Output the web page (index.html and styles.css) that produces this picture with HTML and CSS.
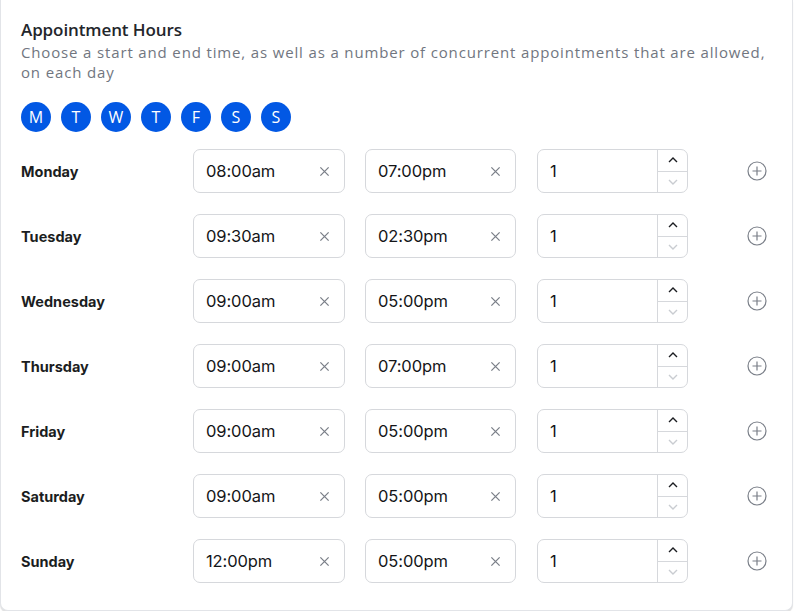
FILE: index.html
```html
<!DOCTYPE html>
<html>
<head>
<meta charset="utf-8">
<link rel="stylesheet" href="styles.css">
</head>
<body>
<div class="card">
  <h2 class="title">Appointment Hours</h2>
  <p class="subtitle">Choose a start and end time, as well as a number of concurrent appointments that are allowed, on each day</p>
  <div class="days">
    <span class="day">M</span><span class="day">T</span><span class="day">W</span><span class="day">T</span><span class="day">F</span><span class="day">S</span><span class="day">S</span>
  </div>
  <div class="rows">
    <div class="row">
      <div class="label">Monday</div>
      <div class="field"><span class="val">08:00am</span><svg class="x" viewBox="0 0 12 12"><path d="M1.5 1.5l9 9M10.5 1.5l-9 9"/></svg></div>
      <div class="field"><span class="val">07:00pm</span><svg class="x" viewBox="0 0 12 12"><path d="M1.5 1.5l9 9M10.5 1.5l-9 9"/></svg></div>
      <div class="num"><span class="val">1</span><div class="step"><div class="up"><svg viewBox="0 0 12 8"><path d="M2 6l4-4 4 4"/></svg></div><div class="down"><svg viewBox="0 0 12 8"><path d="M2 2l4 4 4-4"/></svg></div></div></div>
      <svg class="plus" viewBox="0 0 20 20"><circle cx="10" cy="10" r="9"/><path d="M10 5.5v9M5.5 10h9"/></svg>
    </div>
    <div class="row">
      <div class="label">Tuesday</div>
      <div class="field"><span class="val">09:30am</span><svg class="x" viewBox="0 0 12 12"><path d="M1.5 1.5l9 9M10.5 1.5l-9 9"/></svg></div>
      <div class="field"><span class="val">02:30pm</span><svg class="x" viewBox="0 0 12 12"><path d="M1.5 1.5l9 9M10.5 1.5l-9 9"/></svg></div>
      <div class="num"><span class="val">1</span><div class="step"><div class="up"><svg viewBox="0 0 12 8"><path d="M2 6l4-4 4 4"/></svg></div><div class="down"><svg viewBox="0 0 12 8"><path d="M2 2l4 4 4-4"/></svg></div></div></div>
      <svg class="plus" viewBox="0 0 20 20"><circle cx="10" cy="10" r="9"/><path d="M10 5.5v9M5.5 10h9"/></svg>
    </div>
    <div class="row">
      <div class="label">Wednesday</div>
      <div class="field"><span class="val">09:00am</span><svg class="x" viewBox="0 0 12 12"><path d="M1.5 1.5l9 9M10.5 1.5l-9 9"/></svg></div>
      <div class="field"><span class="val">05:00pm</span><svg class="x" viewBox="0 0 12 12"><path d="M1.5 1.5l9 9M10.5 1.5l-9 9"/></svg></div>
      <div class="num"><span class="val">1</span><div class="step"><div class="up"><svg viewBox="0 0 12 8"><path d="M2 6l4-4 4 4"/></svg></div><div class="down"><svg viewBox="0 0 12 8"><path d="M2 2l4 4 4-4"/></svg></div></div></div>
      <svg class="plus" viewBox="0 0 20 20"><circle cx="10" cy="10" r="9"/><path d="M10 5.5v9M5.5 10h9"/></svg>
    </div>
    <div class="row">
      <div class="label">Thursday</div>
      <div class="field"><span class="val">09:00am</span><svg class="x" viewBox="0 0 12 12"><path d="M1.5 1.5l9 9M10.5 1.5l-9 9"/></svg></div>
      <div class="field"><span class="val">07:00pm</span><svg class="x" viewBox="0 0 12 12"><path d="M1.5 1.5l9 9M10.5 1.5l-9 9"/></svg></div>
      <div class="num"><span class="val">1</span><div class="step"><div class="up"><svg viewBox="0 0 12 8"><path d="M2 6l4-4 4 4"/></svg></div><div class="down"><svg viewBox="0 0 12 8"><path d="M2 2l4 4 4-4"/></svg></div></div></div>
      <svg class="plus" viewBox="0 0 20 20"><circle cx="10" cy="10" r="9"/><path d="M10 5.5v9M5.5 10h9"/></svg>
    </div>
    <div class="row">
      <div class="label">Friday</div>
      <div class="field"><span class="val">09:00am</span><svg class="x" viewBox="0 0 12 12"><path d="M1.5 1.5l9 9M10.5 1.5l-9 9"/></svg></div>
      <div class="field"><span class="val">05:00pm</span><svg class="x" viewBox="0 0 12 12"><path d="M1.5 1.5l9 9M10.5 1.5l-9 9"/></svg></div>
      <div class="num"><span class="val">1</span><div class="step"><div class="up"><svg viewBox="0 0 12 8"><path d="M2 6l4-4 4 4"/></svg></div><div class="down"><svg viewBox="0 0 12 8"><path d="M2 2l4 4 4-4"/></svg></div></div></div>
      <svg class="plus" viewBox="0 0 20 20"><circle cx="10" cy="10" r="9"/><path d="M10 5.5v9M5.5 10h9"/></svg>
    </div>
    <div class="row">
      <div class="label">Saturday</div>
      <div class="field"><span class="val">09:00am</span><svg class="x" viewBox="0 0 12 12"><path d="M1.5 1.5l9 9M10.5 1.5l-9 9"/></svg></div>
      <div class="field"><span class="val">05:00pm</span><svg class="x" viewBox="0 0 12 12"><path d="M1.5 1.5l9 9M10.5 1.5l-9 9"/></svg></div>
      <div class="num"><span class="val">1</span><div class="step"><div class="up"><svg viewBox="0 0 12 8"><path d="M2 6l4-4 4 4"/></svg></div><div class="down"><svg viewBox="0 0 12 8"><path d="M2 2l4 4 4-4"/></svg></div></div></div>
      <svg class="plus" viewBox="0 0 20 20"><circle cx="10" cy="10" r="9"/><path d="M10 5.5v9M5.5 10h9"/></svg>
    </div>
    <div class="row">
      <div class="label">Sunday</div>
      <div class="field"><span class="val">12:00pm</span><svg class="x" viewBox="0 0 12 12"><path d="M1.5 1.5l9 9M10.5 1.5l-9 9"/></svg></div>
      <div class="field"><span class="val">05:00pm</span><svg class="x" viewBox="0 0 12 12"><path d="M1.5 1.5l9 9M10.5 1.5l-9 9"/></svg></div>
      <div class="num"><span class="val">1</span><div class="step"><div class="up"><svg viewBox="0 0 12 8"><path d="M2 6l4-4 4 4"/></svg></div><div class="down"><svg viewBox="0 0 12 8"><path d="M2 2l4 4 4-4"/></svg></div></div></div>
      <svg class="plus" viewBox="0 0 20 20"><circle cx="10" cy="10" r="9"/><path d="M10 5.5v9M5.5 10h9"/></svg>
    </div>
  </div>
</div>
</body>
</html>
```

FILE: styles.css
```css
* { box-sizing: border-box; }
html, body { margin: 0; padding: 0; background: #fff; }
body { font-family: Inter, "Noto Sans", sans-serif; color: #111827; }

.card {
  width: 793px;
  border: 1px solid #e2e4e8;
  border-top: none;
  border-radius: 0 0 8px 8px;
  box-shadow: 0 2px 1px rgba(0,0,0,0.12);
  padding: 17px 20px 27px 20px;
  background: #fff;
}

.title {
  margin: 0;
  font-family: "Open Sans", sans-serif;
  font-weight: 600;
  font-size: 17px;
  letter-spacing: -0.1px;
  line-height: 25px;
  color: #23262b;
}

.subtitle {
  margin: 0;
  font-family: "Open Sans", sans-serif;
  font-size: 15px;
  letter-spacing: 0.85px;
  line-height: 20px;
  color: #71767f;
  width: 760px;
}

.days {
  display: flex;
  gap: 10px;
  margin-top: 20px;
}
.day {
  width: 30px;
  height: 30px;
  border-radius: 50%;
  background: #0258e4;
  color: #fff;
  font-family: "Open Sans", sans-serif;
  font-size: 16px;
  display: flex;
  align-items: center;
  justify-content: center;
}

.rows {
  margin-top: 17px;
  display: flex;
  flex-direction: column;
  gap: 21px;
}
.row {
  display: flex;
  align-items: center;
  height: 44px;
}
.label {
  width: 172px;
  font-size: 14.5px;
  font-weight: 700;
  color: #1b1d21;
}
.field, .num {
  height: 44px;
  border: 1px solid #d6d8dc;
  border-radius: 7px;
  display: flex;
  align-items: center;
  background: #fff;
}
.field {
  width: 152px;
  padding: 0 14px 0 12px;
  justify-content: space-between;
  margin-right: 20px;
}
.field + .field { width: 151px; margin-right: 21px; }
.val {
  font-size: 16.5px;
  color: #141518;
  letter-spacing: -0.1px;
}
.x {
  width: 11px;
  height: 11px;
  fill: none;
  stroke: #7a7f88;
  stroke-width: 1.4;
}
.num {
  width: 151px;
  padding-left: 12px;
  justify-content: space-between;
  overflow: hidden;
}
.step {
  width: 30px;
  height: 100%;
  border-left: 1px solid #d6d8dc;
  display: flex;
  flex-direction: column;
}
.up, .down {
  flex: 1;
  display: flex;
  align-items: center;
  justify-content: center;
}
.up { border-bottom: 1px solid #d6d8dc; }
.up svg, .down svg {
  width: 12px;
  height: 8px;
  fill: none;
  stroke-width: 1.4;
}
.up svg { stroke: #1b1d21; }
.down svg { stroke: #c9ccd1; }

.plus {
  margin-left: 59px;
  width: 20px;
  height: 20px;
  fill: none;
  stroke: #7a7f88;
  stroke-width: 1.2;
}
```
